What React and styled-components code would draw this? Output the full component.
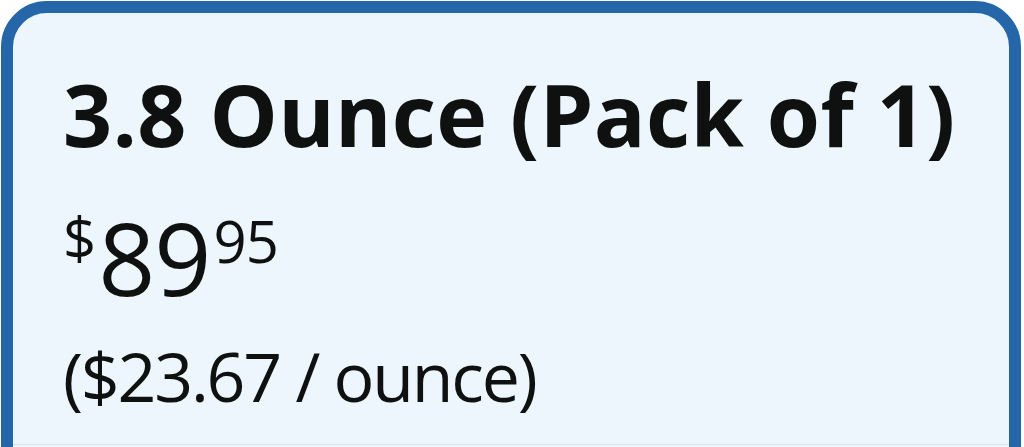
import React from "react";
import styled, { createGlobalStyle } from "styled-components";

const Global = createGlobalStyle`
  html, body {
    margin: 0;
    padding: 0;
    background: #ffffff;
    overflow: hidden;
  }
  body {
    font-family: "Open Sans", "Noto Sans", "Liberation Sans", sans-serif;
    color: #0f1111;
  }
`;

const Tile = styled.div`
  box-sizing: border-box;
  margin: 1px 0 0 1px;
  width: 1020px;
  height: 520px;
  border: 12px solid #2566a8;
  border-radius: 46px;
  background: #edf6fd;
  padding: 58px 0 0 50px;
  display: flex;
  flex-direction: column;
`;

const Title = styled.div`
  font-weight: 700;
  font-size: 86px;
  line-height: 1;
  letter-spacing: 0.3px;
  white-space: nowrap;
`;

const Price = styled.div`
  display: flex;
  align-items: flex-start;
  margin-top: 50px;
  height: 99px;
  line-height: 1;
`;

const Sup = styled.span`
  font-size: 58px;
  line-height: 1;
  margin-top: ${(p) => p.$top || 0}px;
  margin-left: ${(p) => p.$gap || 0}px;
  letter-spacing: -1px;
`;

const Whole = styled.span`
  font-size: 100px;
  line-height: 1;
  letter-spacing: -1px;
  margin-left: 3px;
`;

const Unit = styled.div`
  font-size: 68px;
  line-height: 1;
  margin-top: 36px;
  letter-spacing: -2.2px;
  white-space: nowrap;
`;

const Divider = styled.div`
  margin: 34px 0 0 -50px;
  height: 1px;
  background: #d9e3ea;
`;

export default function App() {
  return (
    <>
      <Global />
      <Tile>
        <Title>3.8 Ounce (Pack of 1)</Title>
        <Price>
          <Sup $top={2}>$</Sup>
          <Whole>89</Whole>
          <Sup $top={5} $gap={3}>95</Sup>
        </Price>
        <Unit>($23.67 / ounce)</Unit>
        <Divider />
      </Tile>
    </>
  );
}
